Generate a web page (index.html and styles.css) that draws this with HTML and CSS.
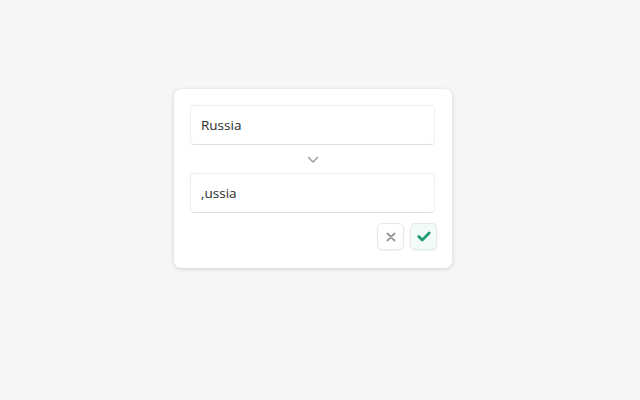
FILE: index.html
```html
<!DOCTYPE html>
<html>
<head>
<meta charset="utf-8">
<link rel="stylesheet" href="styles.css">
</head>
<body>
<div class="page">
  <div class="card">
    <div class="field">Russia</div>
    <div class="arrow">
      <svg width="12" height="8" viewBox="0 0 12 8"><path d="M1.5 1.5 L6 6 L10.5 1.5" fill="none" stroke="#9a9a9a" stroke-width="1.4" stroke-linecap="round" stroke-linejoin="round"/></svg>
    </div>
    <div class="field">,ussia</div>
    <div class="actions">
      <button class="btn cancel">
        <svg width="10" height="10" viewBox="0 0 10 10"><path d="M1.5 1.5 L8.5 8.5 M8.5 1.5 L1.5 8.5" stroke="#9b9b9b" stroke-width="2" stroke-linecap="round"/></svg>
      </button>
      <button class="btn ok">
        <svg width="14" height="11" viewBox="0 0 14 11"><path d="M1.8 5.6 L5.2 9 L12.2 2" fill="none" stroke="#1f9e6e" stroke-width="2.8" stroke-linecap="round" stroke-linejoin="round"/></svg>
      </button>
    </div>
  </div>
</div>
</body>
</html>
```

FILE: styles.css
```css
html, body {
  margin: 0;
  padding: 0;
  background: #f6f6f7;
  font-family: "Open Sans", "Noto Sans", sans-serif;
}
.page {
  width: 640px;
  height: 400px;
  padding-top: 89px;
  padding-left: 174px;
  box-sizing: border-box;
}
.card {
  width: 278px;
  box-sizing: border-box;
  background: #ffffff;
  border-radius: 7px;
  box-shadow: 0 1px 4px rgba(0,0,0,0.16);
  padding: 16px 15px 18px 16px;
}
.field {
  height: 40px;
  box-sizing: border-box;
  border: 1px solid #efefef;
  border-bottom-color: #e0e0e0;
  border-radius: 4px;
  padding: 0 10px;
  display: flex;
  align-items: center;
  font-size: 13.5px;
  color: #2a2a2a;
  width: 245px;
}
.arrow {
  height: 28px;
  display: flex;
  align-items: center;
  justify-content: center;
  width: 245px;
}
.arrow svg { margin-top: 1px; }
.actions {
  display: flex;
  justify-content: flex-end;
  gap: 6px;
  margin-top: 10px;
}
.btn {
  width: 27px;
  height: 27px;
  border: 1px solid #e6e8e8;
  border-radius: 5px;
  background: #fff;
  display: flex;
  align-items: center;
  justify-content: center;
  padding: 0;
  box-shadow: 0 1px 2px rgba(0,0,0,0.05);
}
.btn.ok {
  background: #f3fbf8;
  border-color: #dfe9e6;
}
```
